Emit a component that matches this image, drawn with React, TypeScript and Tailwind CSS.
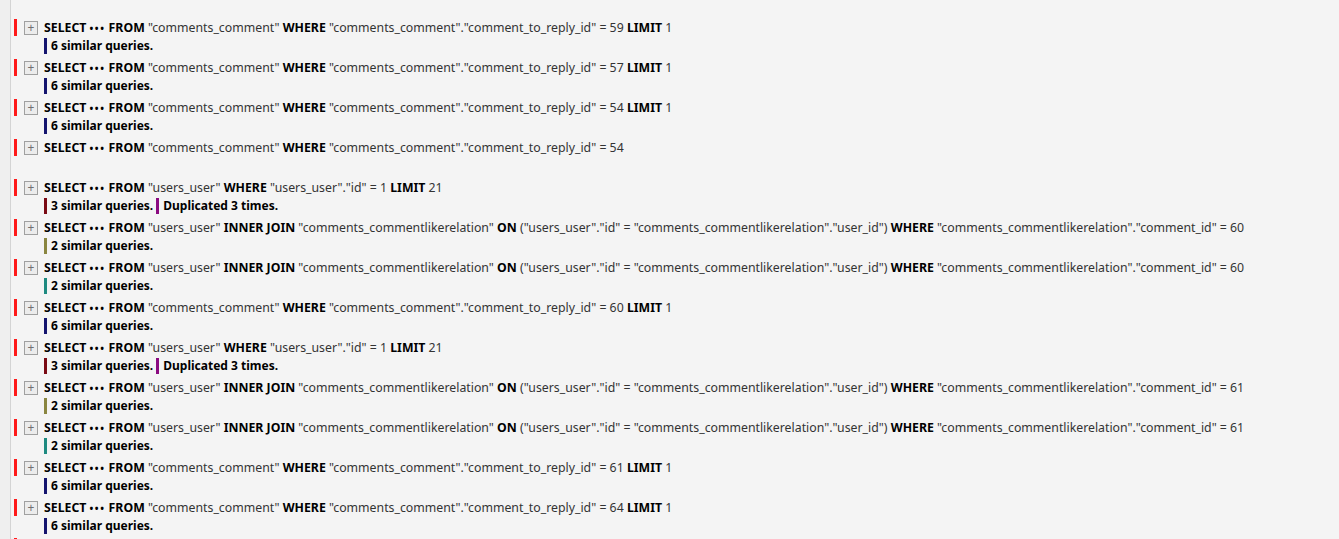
type Tok = [string, boolean];
type Row = {
  sql: Tok[];
  similar?: { n: number; color: string };
  dup?: { n: number; color: string };
};

const K = (s: string): Tok => [s, true];
const T = (s: string): Tok => [s, false];

const head: Tok[] = [K("SELECT "), ["•••", true], K(" FROM")];

const commentReply = (id: number, limit: boolean): Tok[] => {
  const t: Tok[] = [
    ...head,
    T(' "comments_comment" '),
    K("WHERE"),
    T(` "comments_comment"."comment_to_reply_id" = ${id}`),
  ];
  if (limit) t.push(T(" "), K("LIMIT"), T(" 1"));
  return t;
};

const userById: Tok[] = [
  ...head,
  T(' "users_user" '),
  K("WHERE"),
  T(' "users_user"."id" = 1 '),
  K("LIMIT"),
  T(" 21"),
];

const likeJoin = (id: number): Tok[] => [
  ...head,
  T(' "users_user" '),
  K("INNER JOIN"),
  T(' "comments_commentlikerelation" '),
  K("ON"),
  T(' ("users_user"."id" = "comments_commentlikerelation"."user_id") '),
  K("WHERE"),
  T(` "comments_commentlikerelation"."comment_id" = ${id}`),
];

const NAVY = "bg-[#14146e]";
const MAROON = "bg-[#7a0a14]";
const PURPLE = "bg-[#8a0a80]";
const OLIVE = "bg-[#8a8640]";
const TEAL = "bg-[#1e8a80]";

const rows: Row[] = [
  { sql: commentReply(59, true), similar: { n: 6, color: NAVY } },
  { sql: commentReply(57, true), similar: { n: 6, color: NAVY } },
  { sql: commentReply(54, true), similar: { n: 6, color: NAVY } },
  { sql: commentReply(54, false) },
  { sql: userById, similar: { n: 3, color: MAROON }, dup: { n: 3, color: PURPLE } },
  { sql: likeJoin(60), similar: { n: 2, color: OLIVE } },
  { sql: likeJoin(60), similar: { n: 2, color: TEAL } },
  { sql: commentReply(60, true), similar: { n: 6, color: NAVY } },
  { sql: userById, similar: { n: 3, color: MAROON }, dup: { n: 3, color: PURPLE } },
  { sql: likeJoin(61), similar: { n: 2, color: OLIVE } },
  { sql: likeJoin(61), similar: { n: 2, color: TEAL } },
  { sql: commentReply(61, true), similar: { n: 6, color: NAVY } },
  { sql: commentReply(64, true), similar: { n: 6, color: NAVY } },
];

function QueryRow({ row }: { row: Row }) {
  return (
    <div className="h-[40px] shrink-0">
      <div className="flex h-[20px] items-center pt-[1px]">
        <span className="ml-[3px] h-[17px] w-[3px] bg-[#ff1a1a]" />
        <span className="ml-[7px] flex h-[14px] w-[14px] items-center justify-center border border-[#a0a0a0] bg-[#ececec] text-[12px] leading-none text-[#707070]">
          +
        </span>
        <div className="ml-[6px] whitespace-pre pt-[2px] text-[12.3px] text-[#333]">
          {row.sql.map(([s, b], i) =>
            s === "•••" ? (
              <span key={i} className="text-[10px] font-bold tracking-[1.5px] text-black">
                {s}
              </span>
            ) : b ? (
              <span key={i} className="font-bold text-black">
                {s}
              </span>
            ) : (
              <span key={i}>{s}</span>
            )
          )}
        </div>
      </div>
      {row.similar && (
        <div className="flex h-[18px] items-center pl-[33px] text-[12px] font-bold text-black">
          <span className={`h-[16px] w-[3px] ${row.similar.color}`} />
          <span className="ml-[4px]">{row.similar.n} similar queries.</span>
          {row.dup && (
            <>
              <span className={`ml-[3px] h-[16px] w-[3px] ${row.dup.color}`} />
              <span className="ml-[4px]">Duplicated {row.dup.n} times.</span>
            </>
          )}
        </div>
      )}
    </div>
  );
}

export default function App() {
  return (
    <div
      className="flex h-[539px] w-[1339px] overflow-hidden bg-[#f4f4f4]"
      style={{ fontFamily: '"Segoe UI", "Noto Sans", "Open Sans", sans-serif' }}
    >
      <div className="w-[11px] shrink-0 border-r border-[#d4d4d4] bg-[#efefef]" />
      <div className="flex flex-col pt-[17px]">
        {rows.map((r, i) => (
          <QueryRow key={i} row={r} />
        ))}
        <div className="flex">
          <span className="ml-[3px] mt-[1px] h-[17px] w-[3px] bg-[#ff1a1a]" />
        </div>
      </div>
    </div>
  );
}
